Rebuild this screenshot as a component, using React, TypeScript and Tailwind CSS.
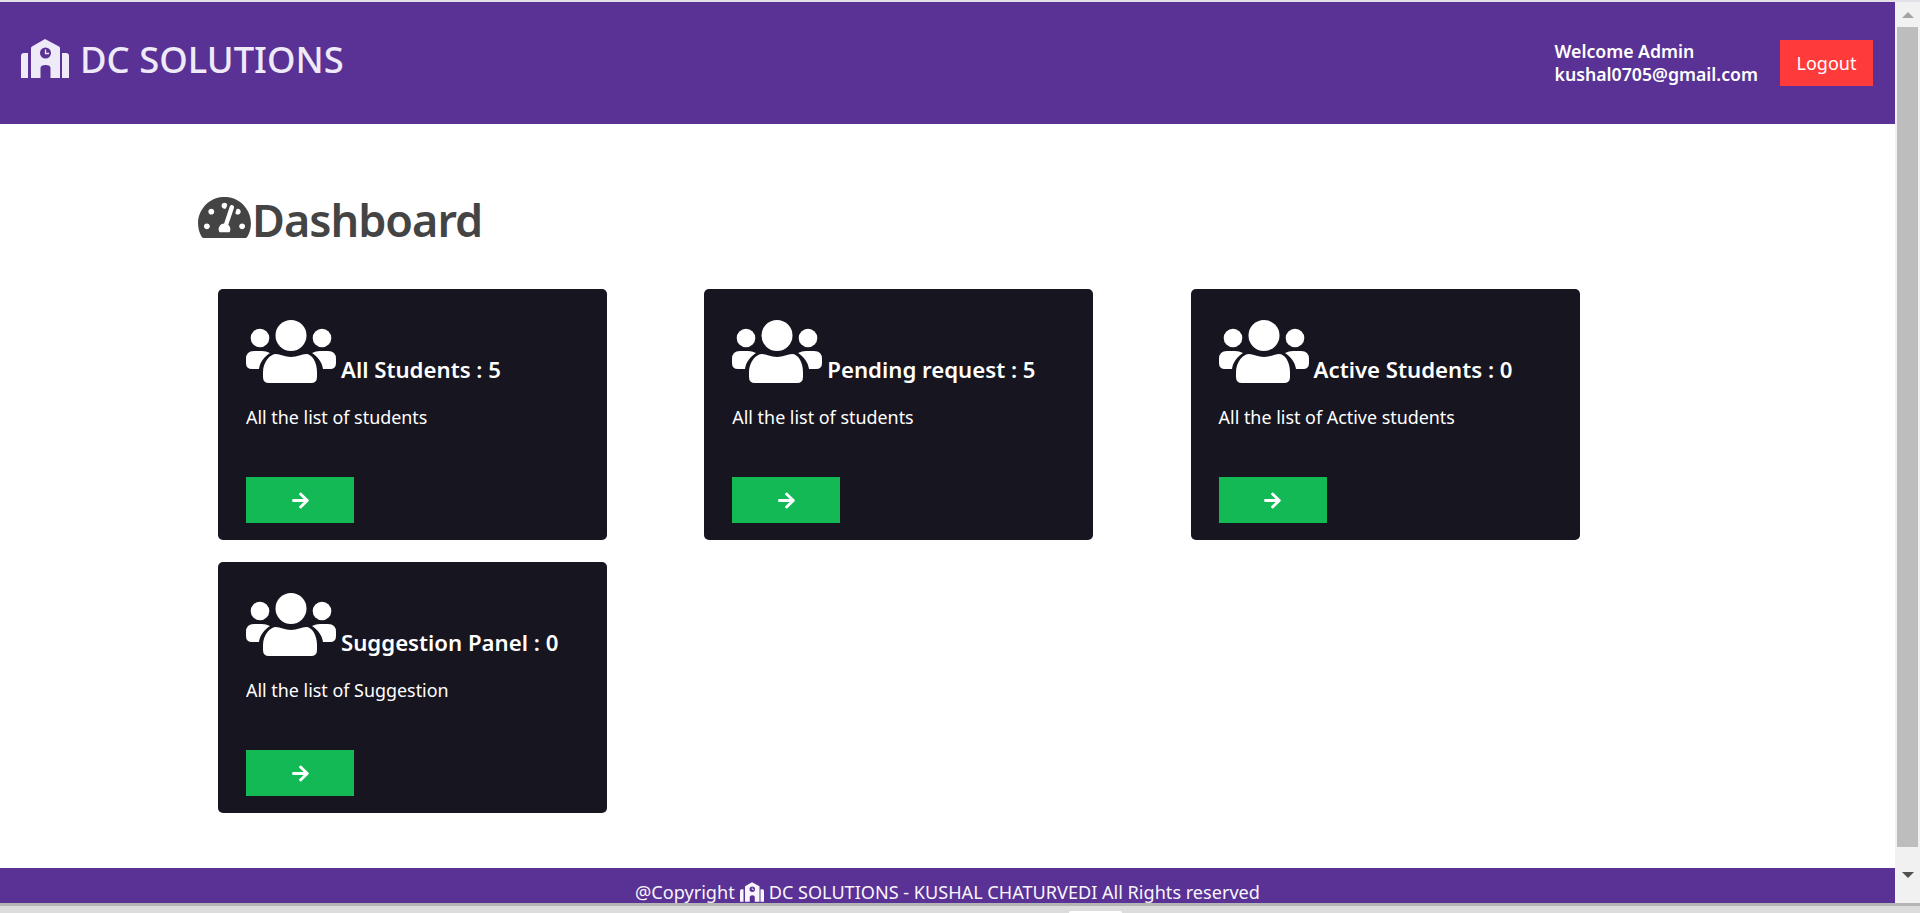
import { FaTachometerAlt, FaArrowRight } from "react-icons/fa";

const cards = [
  { title: "All Students : 5", text: "All the list of students" },
  { title: "Pending request : 5", text: "All the list of students" },
  { title: "Active Students : 0", text: "All the list of Active students" },
  { title: "Suggestion Panel : 0", text: "All the list of Suggestion" },
];

function SchoolIcon({ className }: { className: string }) {
  return (
    <svg viewBox="0 0 48 39" fill="currentColor" className={className}>
      <path d="M0 39V17Q0 14 3 14H7V39Z" />
      <path d="M41 14H45Q48 14 48 17V39H41Z" />
      <path
        fillRule="evenodd"
        d="M10 39V9Q10 8 11 7.5L24 0L38 7.5Q39 8 39 9V39H29.5V29Q29.5 26 24.5 26Q19.5 26 19.5 29V39ZM24.5 8.5A5.5 5.5 0 1 0 24.5 19.5A5.5 5.5 0 1 0 24.5 8.5Z"
      />
      <path d="M24.5 10.5V14.5H28" fill="none" stroke="currentColor" strokeWidth="1.3" />
    </svg>
  );
}

function UsersIcon({ className }: { className: string }) {
  return (
    <svg viewBox="0 0 90 63" fill="currentColor" className={className}>
      <circle cx="45" cy="15.5" r="15.5" />
      <circle cx="14" cy="18" r="9.3" />
      <circle cx="76" cy="18" r="9.3" />
      <path d="M17 52C17 42 24 34 30 34C34 34 39 37 45 37C51 37 56 34 60 34C66 34 71 42 71 52V57Q71 63 65 63H23Q17 63 17 57Z" />
      <path d="M8 31H16Q20 31 24 33C18 37 14 42 13 49H6Q0 49 0 43V39Q0 31 8 31Z" />
      <path d="M82 31H74Q70 31 66 33C72 37 76 42 77 49H84Q90 49 90 43V39Q90 31 82 31Z" />
    </svg>
  );
}

function Card({ title, text }: { title: string; text: string }) {
  return (
    <div className="h-[251px] rounded-[5px] bg-[#17151f] pt-[31px] pl-[28px] text-white">
      <div className="flex h-[63px] items-end">
        <UsersIcon className="h-[63px] w-[90px] shrink-0" />
        <h3 className="ml-[5px] text-[22.2px] leading-[27px] font-semibold whitespace-nowrap">{title}</h3>
      </div>
      <p className="mt-[21px] h-[26px] text-[17.9px] leading-[26px]">{text}</p>
      <button className="mt-[47px] flex h-[46px] w-[108px] items-center justify-center bg-[#12b955] text-white">
        <FaArrowRight className="h-[19px] w-[17px]" />
      </button>
    </div>
  );
}

export default function App() {
  return (
    <div className="flex h-[913px] flex-col overflow-hidden bg-[#dcdcdc] font-['Noto_Sans',sans-serif]">
      <div className="h-[2px] shrink-0 bg-[#e3e0e8]" />
      <div className="flex h-[901px] shrink-0">
        <main className="flex h-full w-[1895px] flex-col overflow-hidden bg-white">
          <header className="flex h-[122px] shrink-0 items-center justify-between bg-[#5a3195] pr-[22px] pl-[21px]">
            <div className="-mt-[9px] flex items-center text-[#efeaf7]">
              <SchoolIcon className="h-[39px] w-[48px]" />
              <span className="ml-[11px] text-[36.4px] leading-[48px] font-medium">DC SOLUTIONS</span>
            </div>
            <div className="flex items-center">
              <div className="text-[17.7px] leading-[23px] font-semibold text-white">
                <div>Welcome Admin</div>
                <div>kushal0705@gmail.com</div>
              </div>
              <button className="ml-[22px] h-[46px] w-[93px] bg-[#ff3a3a] text-[18px] text-white">Logout</button>
            </div>
          </header>
          <div className="h-[744px] shrink-0 pl-[198px]">
            <h1 className="mt-[67px] flex h-[54px] items-center text-[45px] leading-[54px] font-semibold tracking-[-1px] text-[#444444]">
              <span className="block h-[42px] w-[54px] shrink-0 overflow-hidden">
                <FaTachometerAlt className="-mt-[3px] h-[47px] w-[53px]" />
              </span>
              <span className="mt-[3px]">Dashboard</span>
            </h1>
            <div className="mt-[44px] ml-[20px] grid grid-cols-[389px_389px_389px] gap-x-[97.3px] gap-y-[22px]">
              {cards.map((c) => (
                <Card key={c.title} title={c.title} text={c.text} />
              ))}
            </div>
          </div>
          <footer className="flex h-[35px] shrink-0 items-start justify-center bg-[#5a3195] pt-[11px] text-[18.1px] leading-[26px] text-[#f8f6fc]">
            <span className="flex items-center whitespace-nowrap">
              @Copyright
              <SchoolIcon className="mx-[5px] h-[20px] w-[24px]" />
              DC SOLUTIONS - KUSHAL CHATURVEDI All Rights reserved
            </span>
          </footer>
        </main>
        <div className="flex h-full w-[25px] shrink-0 flex-col items-center bg-[#f1f1f1]">
          <div className="flex h-[25px] w-full shrink-0 items-center justify-center">
            <div className="h-0 w-0 border-x-[6px] border-b-[6px] border-x-transparent border-b-[#a3a3a3]" />
          </div>
          <div className="h-[820px] w-[21px] shrink-0 bg-[#bdbdbd]" />
          <div className="flex flex-1 items-center justify-center">
            <div className="h-0 w-0 border-x-[6px] border-t-[6px] border-x-transparent border-t-[#505050]" />
          </div>
        </div>
      </div>
      <div className="h-[3px] shrink-0 bg-[#b5b5b5]" />
      <div className="flex flex-1 justify-start">
        <div className="mt-[5px] ml-[1069px] h-[2px] w-[53px] rounded-t-[2px] bg-white" />
      </div>
    </div>
  );
}
